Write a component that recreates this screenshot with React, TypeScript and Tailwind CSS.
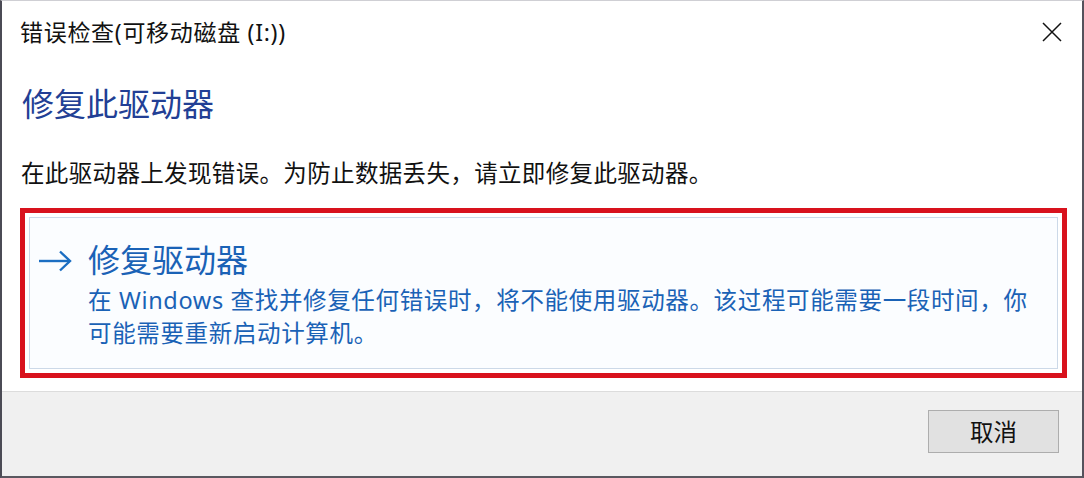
function ArrowIcon(): JSX.Element {
  return (
    <svg width="34" height="22" viewBox="0 0 34 22" fill="none" className="shrink-0 mt-[10px]">
      <path d="M1 11 H32" stroke="#1b6ec2" strokeWidth="2.4" />
      <path d="M22 1.5 L32 11 L22 20.5" stroke="#1b6ec2" strokeWidth="2.4" strokeLinejoin="miter" />
    </svg>
  );
}

function CloseIcon(): JSX.Element {
  return (
    <svg width="20" height="20" viewBox="0 0 20 20" fill="none">
      <path d="M1 1 L19 19 M19 1 L1 19" stroke="#111" strokeWidth="1.5" />
    </svg>
  );
}

export default function App(): JSX.Element {
  return (
    <div className="w-[1084px] h-[478px] flex flex-col bg-white border-t border-t-[#cfcfd4] border-l-2 border-r-2 border-b-2 border-l-[#4b4b55] border-r-[#55525c] border-b-[#5a5860] font-['Noto_Sans','Noto_Sans_CJK_SC',sans-serif] text-[#111]">
      {/* content area */}
      <div className="flex-1 flex flex-col pl-[18px] pr-[15px]">
        <div className="h-[62px] flex items-center justify-between pr-[5px]">
          <div className="text-[23px] leading-[30px] tracking-[0.7px]">错误检查(可移动磁盘 (I:))</div>
          <CloseIcon />
        </div>

        <div className="mt-[21px] text-[32px] leading-[40px] text-[#223f95] pl-[2px]">修复此驱动器</div>

        <div className="mt-[34px] text-[23.5px] leading-[30px] pl-[1px] tracking-[0.35px]">
          在此驱动器上发现错误。为防止数据丢失，请立即修复此驱动器。
        </div>

        <div className="mt-[20px] w-[1047px] h-[170px] border-[5px] border-[#d8121d] p-[4px] flex">
          <div className="flex-1 border border-[#ccd9e8] bg-[#fbfdff] flex items-start gap-[16px] pl-[8px] pt-[22px]">
            <ArrowIcon />
            <div className="flex flex-col text-[#1a62b6]">
              <div className="text-[32px] leading-[40px]">修复驱动器</div>
              <div className="mt-[4px] text-[23.5px] leading-[33px] whitespace-nowrap tracking-[0.65px]">
                在 Windows 查找并修复任何错误时，将不能使用驱动器。该过程可能需要一段时间，你
                <br />
                可能需要重新启动计算机。
              </div>
            </div>
          </div>
        </div>
      </div>

      {/* footer */}
      <div className="h-[85px] border-t border-[#dcdcdc] bg-[#f0f0f0] flex justify-end items-start pt-[18px] pr-[23px]">
        <button
          type="button"
          className="w-[131px] h-[43px] border border-[#adadad] bg-[#e1e1e1] text-[23.5px] leading-[30px] text-[#111] flex items-center justify-center"
        >
          取消
        </button>
      </div>
    </div>
  );
}
